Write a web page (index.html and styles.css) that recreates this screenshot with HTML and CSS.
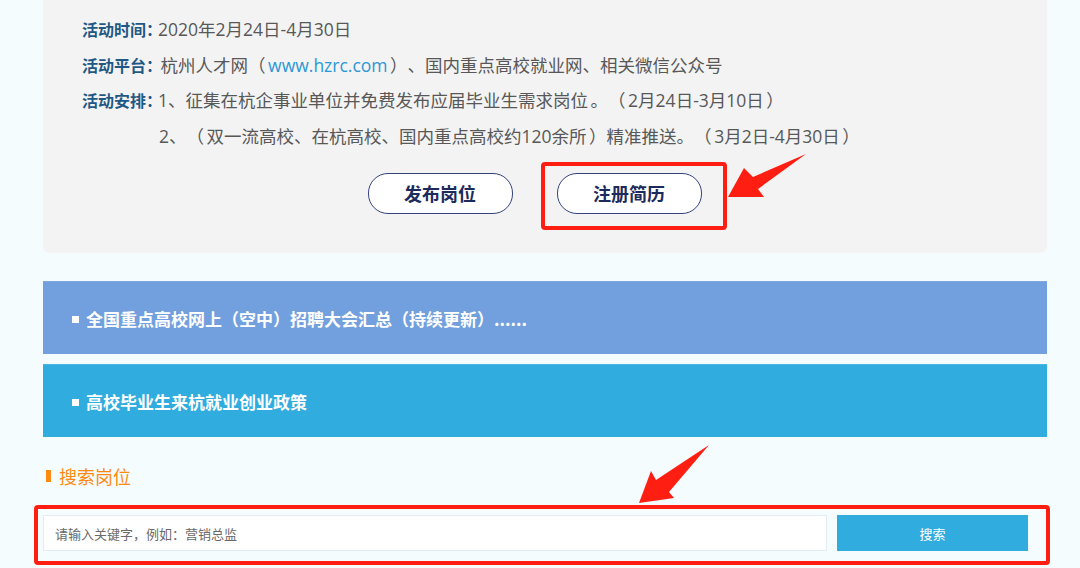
FILE: index.html
```html
<!DOCTYPE html>
<html lang="zh-CN">
<head>
  <meta charset="UTF-8">
  <title>杭州人才网 - 高校毕业生招聘活动</title>
  <link rel="stylesheet" href="styles.css">
</head>
<body>
  <div class="page">
    <section class="intro">
      <p class="row"><span class="label">活动时间：</span>2020年2月24日-4月30日</p>
      <p class="row"><span class="label">活动平台：</span> 杭州人才网（ <a class="link" href="#">www.hzrc.com</a> ）、国内重点高校就业网、相关微信公众号</p>
      <p class="row"><span class="label">活动安排：</span>1、征集在杭企事业单位并免费发布应届毕业生需求岗位 。（ 2月24日-3月10日 ）</p>
      <p class="row indent">2、（ 双一流高校、在杭高校、国内重点高校约120余所 ）精准推送。（ 3月2日-4月30日 ）</p>
      <div class="actions">
        <a class="btn" href="#">发布岗位</a>
        <a class="btn" href="#">注册简历</a>
      </div>
    </section>

    <a class="topic topic-blue" href="#"><span class="dot"></span>全国重点高校网上（空中）招聘大会汇总（持续更新）......</a>
    <a class="topic topic-cyan" href="#"><span class="dot"></span>高校毕业生来杭就业创业政策</a>

    <h3 class="search-title">搜索岗位</h3>
    <form class="search" onsubmit="return false">
      <input class="search-input" type="text" placeholder="请输入关键字，例如：营销总监">
      <button class="search-btn" type="submit">搜索</button>
    </form>
  </div>

  <!-- annotation marks drawn over the page -->
  <div class="mark mark-btn"></div>
  <div class="mark mark-search"></div>
  <svg class="arrows" width="1080" height="568" viewBox="0 0 1080 568">
    <polygon points="728,197 744,168 753,177 806,154 758,189 764,197" fill="#ff1f12"/>
    <polygon points="639,503 651,471 656,480 709,445 669,492 674,498" fill="#ff1f12"/>
  </svg>
</body>
</html>
```

FILE: styles.css
```css
body {
  margin: 0;
  background: #f4fcfe;
  font-family: "Microsoft YaHei", "Noto Sans CJK SC", sans-serif;
  color: #555;
  position: relative;
  overflow: hidden;
  text-spacing-trim: space-all;
}

.page {
  width: 1004px;
  padding-left: 43px;
  height: 568px;
}

.intro {
  background: #f3f3f3;
  border-radius: 0 0 6px 6px;
  padding: 12px 0 39px 39px;
}

.row {
  margin: 0;
  font-family: "Open Sans", "Noto Sans CJK SC", sans-serif;
  font-size: 17.5px;
  line-height: 35.5px;
  color: #585858;
  white-space: nowrap;
  word-spacing: -2px;
}

.label {
  font-family: "Noto Sans CJK SC", sans-serif;
  font-size: 16px;
  line-height: 1;
  font-weight: bold;
  color: #1f5885;
  margin-right: -4px;
}

.indent {
  padding-left: 77px;
}

.link {
  color: #2b97d6;
  text-decoration: none;
}

.actions {
  display: flex;
  justify-content: center;
  gap: 44px;
  margin-top: 19px;
  padding-right: 60px;
}

.btn {
  width: 143px;
  height: 39px;
  line-height: 39px;
  border: 1px solid #34427e;
  border-radius: 20px;
  background: #fff;
  text-align: center;
  font-size: 18px;
  font-weight: bold;
  color: #1c2a5c;
  text-decoration: none;
}

.topic {
  display: flex;
  align-items: center;
  height: 73px;
  padding-left: 29px;
  margin-top: 28px;
  font-size: 17px;
  font-weight: bold;
  color: #fff;
  text-decoration: none;
  box-sizing: border-box;
}

.topic + .topic {
  margin-top: 10px;
}

.topic-blue {
  background: #729fdd;
  border-top: 1px solid #7ea8e0;
}

.topic-cyan {
  background: #30acde;
  border-top: 1px solid #48b7e2;
}

.dot {
  width: 7px;
  height: 7px;
  background: #fff;
  margin-right: 7px;
  margin-top: 2px;
}

.search-title {
  margin: 27px 0 0 3px;
  font-size: 18px;
  line-height: 24px;
  font-weight: normal;
  color: #ff8a12;
  display: flex;
  align-items: center;
}

.search-title::before {
  content: "";
  width: 5px;
  height: 12px;
  background: #ff8a12;
  margin-right: 8px;
}

.search {
  display: flex;
  gap: 10px;
  margin-top: 27px;
  width: 985px;
}

.search-input {
  flex: 1;
  height: 36px;
  box-sizing: border-box;
  border: 1px solid #e3ecf0;
  background: #fff;
  padding: 0 11px;
  font-family: inherit;
  font-size: 13px;
  color: #333;
  outline: none;
  text-spacing-trim: space-all;
}

.search-input::placeholder {
  color: #6a6a6a;
}

.search-btn {
  width: 191px;
  height: 36px;
  border: 0;
  background: #30acde;
  color: #fff;
  font-family: inherit;
  font-size: 13px;
  cursor: pointer;
}

.mark {
  position: absolute;
  border: 4px solid #ff1f12;
  border-radius: 4px;
  box-sizing: border-box;
  pointer-events: none;
}

.mark-btn {
  left: 541px;
  top: 162px;
  width: 186px;
  height: 68px;
}

.mark-search {
  left: 34px;
  top: 505px;
  width: 1016px;
  height: 60px;
}

.arrows {
  position: absolute;
  left: 0;
  top: 0;
  pointer-events: none;
}
```
